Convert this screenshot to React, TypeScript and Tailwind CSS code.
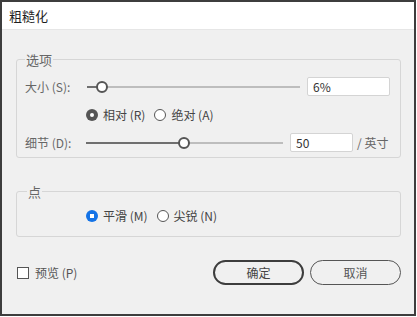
import React from "react";

const font = { fontFamily: '"Noto Sans CJK SC", "Noto Sans", sans-serif' };

function Slider({ width, pos }: { width: number; pos: number }) {
  return (
    <div className="relative h-[20px] flex items-center" style={{ width }}>
      <div className="h-[2px] bg-[#6f6f6f]" style={{ width: pos }} />
      <div className="h-[2px] flex-1 bg-[#bdbdbd]" />
      <div
        className="absolute top-[4px] w-[12px] h-[12px] rounded-full border-2 border-[#555] bg-white"
        style={{ left: pos - 6 }}
      />
    </div>
  );
}

function Radio({ checked, blue, label }: { checked?: boolean; blue?: boolean; label: string }) {
  return (
    <div className="flex items-center gap-[5px]">
      {checked ? (
        <div
          className={`w-[12px] h-[12px] rounded-full flex items-center justify-center ${
            blue ? "bg-[#1473e6]" : "bg-[#555]"
          }`}
        >
          <div className={`w-[4px] h-[4px] bg-white ${blue ? "" : "rounded-full"}`} />
        </div>
      ) : (
        <div className="w-[12px] h-[12px] rounded-full border border-[#555] bg-white" />
      )}
      <span className="text-[12px] text-[#444]">{label}</span>
    </div>
  );
}

export default function App() {
  return (
    <div className="w-[417px] h-[317px] bg-white" style={font}>
      <div className="w-[416px] h-[316px] border-2 border-[#3d3d3d] bg-[#f0f0f0] flex flex-col">
        {/* title */}
        <div className="h-[28px] bg-white flex items-center px-[7px] text-[13px] text-[#1e1e1e] border-b border-[#e6e6e6]">
          粗糙化
        </div>

        <div className="flex flex-col pl-[14px] pr-[13px]">
          {/* 选项 */}
          <fieldset className="mt-[20px] border border-[#d6d6d6] rounded-[3px] pl-[8px] pr-[9px] pb-[4px]">
            <legend className="px-[1px] text-[13px] text-[#666]">选项</legend>
            <div className="mt-[7px] h-[20px] flex items-center">
              <span className="w-[62px] text-[12px] text-[#666] whitespace-nowrap">大小 (S):</span>
              <Slider width={213} pos={15} />
              <input
                readOnly
                value="6%"
                className="ml-[7px] w-[83px] h-[19px] bg-white border border-[#d4d4d4] rounded-[2px] pl-[5px] text-[12px] text-[#333] outline-none"
              />
            </div>
            <div className="mt-[8px] h-[20px] flex items-center pl-[61px] gap-[9px]">
              <Radio checked label="相对 (R)" />
              <Radio label="绝对 (A)" />
            </div>
            <div className="mt-[8px] h-[20px] flex items-center">
              <span className="w-[61px] text-[12px] text-[#666] whitespace-nowrap">细节 (D):</span>
              <Slider width={197} pos={98} />
              <input
                readOnly
                value="50"
                className="ml-[7px] w-[63px] h-[19px] bg-white border border-[#d4d4d4] rounded-[2px] pl-[5px] text-[12px] text-[#333] outline-none"
              />
              <span className="ml-[4px] text-[12px] text-[#666] whitespace-nowrap">/ 英寸</span>
            </div>
          </fieldset>

          {/* 点 */}
          <fieldset className="mt-[24px] border border-[#d6d6d6] rounded-[3px] pl-[10px] pr-[9px] pb-[10px]">
            <legend className="px-[1px] text-[13px] text-[#666]">点</legend>
            <div className="mt-[5px] h-[20px] flex items-center pl-[59px] gap-[9px]">
              <Radio checked blue label="平滑 (M)" />
              <Radio label="尖锐 (N)" />
            </div>
          </fieldset>

          {/* footer */}
          <div className="mt-[23px] flex items-center">
            <div className="flex items-center gap-[6px] pl-[1px]">
              <div className="w-[12px] h-[12px] border border-[#555] bg-white" />
              <span className="text-[12px] text-[#555]">预览 (P)</span>
            </div>
            <div className="ml-auto flex gap-[6px]">
              <button className="w-[91px] h-[25px] rounded-full border-2 border-[#3d3d3d] text-[12px] text-[#444]">
                确定
              </button>
              <button className="w-[91px] h-[25px] rounded-full border border-[#555] text-[12px] text-[#555]">
                取消
              </button>
            </div>
          </div>
        </div>
      </div>
    </div>
  );
}
